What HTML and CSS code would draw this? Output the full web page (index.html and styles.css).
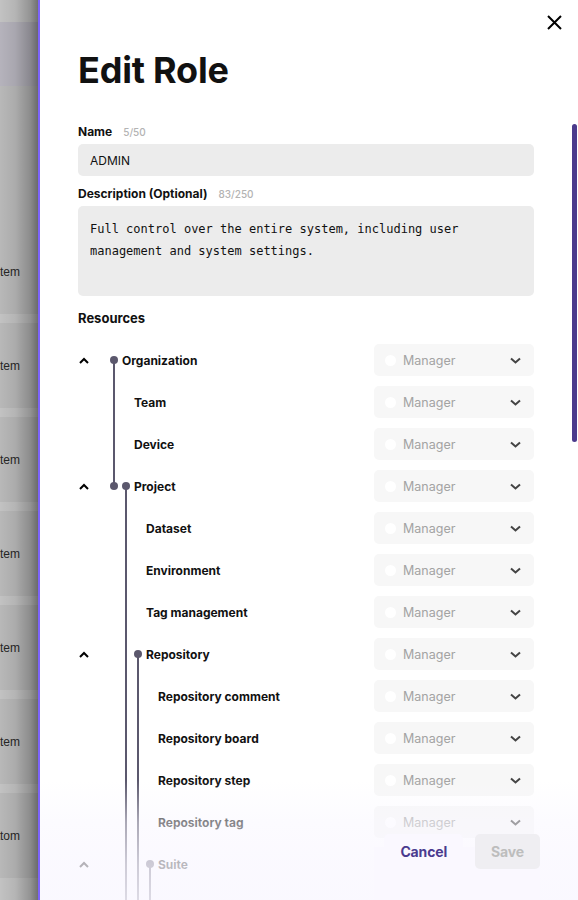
FILE: index.html
```html
<!DOCTYPE html>
<html lang="en">
<head>
  <meta charset="UTF-8">
  <meta name="viewport" content="width=device-width, initial-scale=1.0">
  <title>Edit Role</title>
  <link rel="stylesheet" href="styles.css">
</head>
<body>
  <!-- page behind the drawer, mostly hidden -->
  <div class="page">
    <div class="page-top"></div>
    <div class="page-band"></div>
    <div class="page-gap"></div>
    <ul class="page-list">
      <li class="page-item"><span>Item</span></li>
      <li class="page-item"><span>Item</span></li>
      <li class="page-item"><span>Item</span></li>
      <li class="page-item"><span>Item</span></li>
      <li class="page-item"><span>Item</span></li>
      <li class="page-item"><span>Item</span></li>
      <li class="page-item"><span class="cut-long">Bottom</span></li>
    </ul>
  </div>
  <div class="backdrop"></div>

  <aside class="drawer">
    <button class="close" aria-label="Close">
      <svg width="15" height="15" viewBox="0 0 15 15"><path d="M1 1L14 14M14 1L1 14" stroke="#000" stroke-width="2" fill="none"/></svg>
    </button>

    <div class="drawer-body">
      <h1 class="title">Edit Role</h1>

      <div class="field">
        <div class="label">Name <span class="count">5/50</span></div>
        <div class="input">ADMIN</div>
      </div>
      <div class="field">
        <div class="label">Description (Optional) <span class="count">83/250</span></div>
        <div class="textarea">Full control over the entire system, including user management and system settings.</div>
      </div>

      <h2 class="section-title">Resources</h2>

      <div class="tree">
        <svg class="tree-lines" width="100" height="720" viewBox="0 0 100 720">
          <g stroke="#5b586d" stroke-width="2">
            <line x1="36" y1="16" x2="36" y2="142"/>
            <line x1="48" y1="142" x2="48" y2="720"/>
            <line x1="60" y1="310" x2="60" y2="720"/>
            <line x1="72" y1="520" x2="72" y2="720"/>
          </g>
          <g fill="#5b586d">
            <circle cx="36" cy="16" r="4"/>
            <circle cx="36" cy="142" r="4"/>
            <circle cx="48" cy="142" r="4"/>
            <circle cx="60" cy="310" r="4"/>
            <circle cx="72" cy="520" r="4"/>
          </g>
        </svg>

        <div class="tree-row"><span class="toggle"><svg width="10" height="7" viewBox="0 0 10 7"><path d="M1 6L5 2L9 6" stroke="#000" stroke-width="2" fill="none"/></svg></span><span class="node lvl-0">Organization</span><div class="select"><i class="radio"></i>Manager<svg class="caret" width="11" height="7" viewBox="0 0 11 7"><path d="M1 1.5L5.5 5.5L10 1.5" stroke="#444" stroke-width="2" fill="none"/></svg></div></div>
        <div class="tree-row"><span class="toggle"></span><span class="node lvl-1">Team</span><div class="select"><i class="radio"></i>Manager<svg class="caret" width="11" height="7" viewBox="0 0 11 7"><path d="M1 1.5L5.5 5.5L10 1.5" stroke="#444" stroke-width="2" fill="none"/></svg></div></div>
        <div class="tree-row"><span class="toggle"></span><span class="node lvl-1">Device</span><div class="select"><i class="radio"></i>Manager<svg class="caret" width="11" height="7" viewBox="0 0 11 7"><path d="M1 1.5L5.5 5.5L10 1.5" stroke="#444" stroke-width="2" fill="none"/></svg></div></div>
        <div class="tree-row"><span class="toggle"><svg width="10" height="7" viewBox="0 0 10 7"><path d="M1 6L5 2L9 6" stroke="#000" stroke-width="2" fill="none"/></svg></span><span class="node lvl-1">Project</span><div class="select"><i class="radio"></i>Manager<svg class="caret" width="11" height="7" viewBox="0 0 11 7"><path d="M1 1.5L5.5 5.5L10 1.5" stroke="#444" stroke-width="2" fill="none"/></svg></div></div>
        <div class="tree-row"><span class="toggle"></span><span class="node lvl-2">Dataset</span><div class="select"><i class="radio"></i>Manager<svg class="caret" width="11" height="7" viewBox="0 0 11 7"><path d="M1 1.5L5.5 5.5L10 1.5" stroke="#444" stroke-width="2" fill="none"/></svg></div></div>
        <div class="tree-row"><span class="toggle"></span><span class="node lvl-2">Environment</span><div class="select"><i class="radio"></i>Manager<svg class="caret" width="11" height="7" viewBox="0 0 11 7"><path d="M1 1.5L5.5 5.5L10 1.5" stroke="#444" stroke-width="2" fill="none"/></svg></div></div>
        <div class="tree-row"><span class="toggle"></span><span class="node lvl-2">Tag management</span><div class="select"><i class="radio"></i>Manager<svg class="caret" width="11" height="7" viewBox="0 0 11 7"><path d="M1 1.5L5.5 5.5L10 1.5" stroke="#444" stroke-width="2" fill="none"/></svg></div></div>
        <div class="tree-row"><span class="toggle"><svg width="10" height="7" viewBox="0 0 10 7"><path d="M1 6L5 2L9 6" stroke="#000" stroke-width="2" fill="none"/></svg></span><span class="node lvl-2">Repository</span><div class="select"><i class="radio"></i>Manager<svg class="caret" width="11" height="7" viewBox="0 0 11 7"><path d="M1 1.5L5.5 5.5L10 1.5" stroke="#444" stroke-width="2" fill="none"/></svg></div></div>
        <div class="tree-row"><span class="toggle"></span><span class="node lvl-3">Repository comment</span><div class="select"><i class="radio"></i>Manager<svg class="caret" width="11" height="7" viewBox="0 0 11 7"><path d="M1 1.5L5.5 5.5L10 1.5" stroke="#444" stroke-width="2" fill="none"/></svg></div></div>
        <div class="tree-row"><span class="toggle"></span><span class="node lvl-3">Repository board</span><div class="select"><i class="radio"></i>Manager<svg class="caret" width="11" height="7" viewBox="0 0 11 7"><path d="M1 1.5L5.5 5.5L10 1.5" stroke="#444" stroke-width="2" fill="none"/></svg></div></div>
        <div class="tree-row"><span class="toggle"></span><span class="node lvl-3">Repository step</span><div class="select"><i class="radio"></i>Manager<svg class="caret" width="11" height="7" viewBox="0 0 11 7"><path d="M1 1.5L5.5 5.5L10 1.5" stroke="#444" stroke-width="2" fill="none"/></svg></div></div>
        <div class="tree-row"><span class="toggle"></span><span class="node lvl-3">Repository tag</span><div class="select"><i class="radio"></i>Manager<svg class="caret" width="11" height="7" viewBox="0 0 11 7"><path d="M1 1.5L5.5 5.5L10 1.5" stroke="#444" stroke-width="2" fill="none"/></svg></div></div>
        <div class="tree-row"><span class="toggle"><svg width="10" height="7" viewBox="0 0 10 7"><path d="M1 6L5 2L9 6" stroke="#000" stroke-width="2" fill="none"/></svg></span><span class="node lvl-3">Suite</span><div class="select"><i class="radio"></i>Manager<svg class="caret" width="11" height="7" viewBox="0 0 11 7"><path d="M1 1.5L5.5 5.5L10 1.5" stroke="#444" stroke-width="2" fill="none"/></svg></div></div>
        <div class="tree-row"><span class="toggle"></span><span class="node lvl-4">Test case</span><div class="select"><i class="radio"></i>Manager<svg class="caret" width="11" height="7" viewBox="0 0 11 7"><path d="M1 1.5L5.5 5.5L10 1.5" stroke="#444" stroke-width="2" fill="none"/></svg></div></div>
      </div>
    </div>

    <div class="scroll-thumb"></div>
    <div class="fade"></div>

    <div class="footer">
      <button class="btn btn-cancel">Cancel</button>
      <button class="btn btn-save">Save</button>
    </div>
  </aside>
</body>
</html>
```

FILE: styles.css
```css
html, body {margin: 0; height: 100%; overflow: hidden}
body {
  position: relative;
  width: 578px;
  height: 900px;
  background: #fff;
  font-family: Inter, "Noto Sans", sans-serif;
  color: #111;
}

/* page under the drawer */
.page {
  width: 100%;
}
.page-top {height: 22px; background: #fff;}
.page-band {height: 64px; background: #eeebf7;}
.page-gap {height: 143px; background: #f2f2f2;}
.page-list {
  list-style: none;
  margin: 0;
  padding: 0;
}
.page-item {
  height: 85px;
  display: flex;
  align-items: center;
  background: #f2f2f2;
  border-bottom: 9px solid #fff;
  font-family: "Liberation Sans", Arial, sans-serif;
  font-size: 12px;
  color: #333;
}
.page-item span {margin-left: -3.4px;}
.page-item .cut-long {margin-left: -18px;}

.backdrop {
  position: absolute;
  inset: 0;
  background: linear-gradient(to right,
    rgba(0,0,0,.24) 0px,
    rgba(0,0,0,.29) 15px,
    rgba(0,0,0,.42) 30px,
    rgba(0,0,0,.56) 38px,
    rgba(0,0,0,.56) 100%);
}

/* drawer */
.drawer {
  position: absolute;
  top: 0;
  left: 38px;
  right: 0;
  bottom: 0;
  border-left: 2px solid #7c63fb;
  background: #fff;
  overflow: hidden;
}
.close {
  position: absolute;
  top: 15px;
  right: 16px;
  width: 15px;
  height: 15px;
  padding: 0;
  border: 0;
  background: none;
  display: flex;
}
.drawer-body {
  padding: 50px 44px 0 38px;
}
.title {
  margin: 0 0 34px;
  font-size: 36px;
  line-height: 40px;
  font-weight: 700;
  letter-spacing: -0.2px;
}

.field {margin-bottom: 10px;}
.label {
  display: flex;
  align-items: baseline;
  gap: 11px;
  font-size: 12px;
  line-height: 16px;
  font-weight: 700;
  margin-bottom: 4px;
}
.count {
  font-size: 10px;
  font-weight: 500;
  color: #b3b3b3;
}
.input {
  height: 32px;
  box-sizing: border-box;
  padding: 0 12px;
  display: flex;
  align-items: center;
  background: #ececec;
  border-radius: 5px;
  font-size: 12px;
}
.textarea {
  height: 90px;
  box-sizing: border-box;
  padding: 12px 12px;
  background: #ececec;
  border-radius: 5px;
  font-family: "DejaVu Sans Mono", monospace;
  font-size: 12px;
  line-height: 22px;
}

.section-title {
  margin: 12px 0 16px;
  font-size: 13px;
  line-height: 20px;
  font-weight: 700;
}

/* resource tree */
.tree {position: relative;}
.tree-lines {
  position: absolute;
  left: 0;
  top: 0;
}
.tree-row {
  display: flex;
  align-items: center;
  height: 32px;
  margin-bottom: 10px;
}
.toggle {
  flex: none;
  width: 12px;
  display: flex;
  justify-content: center;
}
.node {
  font-size: 12px;
  font-weight: 700;
}
.lvl-0 {padding-left: 32px;}
.lvl-1 {padding-left: 44px;}
.lvl-2 {padding-left: 56px;}
.lvl-3 {padding-left: 68px;}
.lvl-4 {padding-left: 80px;}

.select {
  margin-left: auto;
  width: 160px;
  height: 32px;
  box-sizing: border-box;
  padding: 0 13px 0 11px;
  display: flex;
  align-items: center;
  background: #f7f7f7;
  border-radius: 5px;
  font-size: 12.5px;
  color: #a3a3a3;
}
.radio {
  width: 11px;
  height: 11px;
  border-radius: 50%;
  background: #fff;
  margin-right: 7px;
}
.caret {margin-left: auto;}

.scroll-thumb {
  position: absolute;
  top: 124px;
  right: 1px;
  width: 5px;
  height: 318px;
  border-radius: 3px;
  background: #4b3a8c;
}

.fade {
  position: absolute;
  left: 0;
  right: 0;
  bottom: 0;
  height: 130px;
  background: linear-gradient(to bottom,
    rgba(249,247,255,0) 0%,
    rgba(249,247,255,0) 8%,
    rgba(249,247,255,.5) 40%,
    rgba(249,247,255,.72) 72%,
    rgba(249,247,255,.82) 100%);
}

/* action bar, covers the last select */
.footer {
  position: absolute;
  right: 38px;
  bottom: 0;
  width: 166px;
  height: 53px;
  display: flex;
  justify-content: flex-end;
  align-items: flex-start;
  gap: 12px;
  background: #faf8ff;
}
.btn {
  height: 35px;
  margin-top: -13px;
  padding: 0 16px;
  border: 0;
  border-radius: 5px;
  font-family: Inter, sans-serif;
  font-size: 14px;
  font-weight: 700;
  letter-spacing: -0.15px;
}
.btn-cancel {
  background: #faf8ff;
  color: #4a3b8f;
}
.btn-save {
  background: #efeef2;
  color: #bdbdbd;
}
```
